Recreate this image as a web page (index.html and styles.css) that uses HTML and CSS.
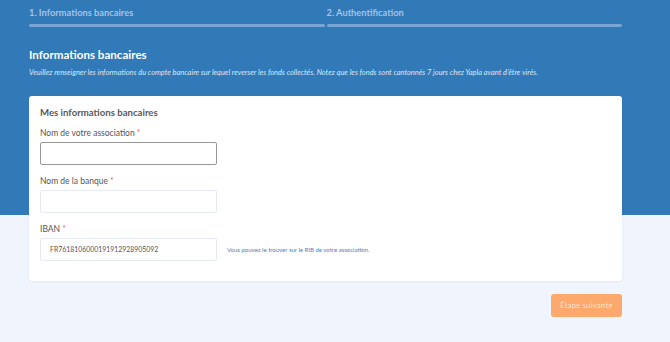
FILE: index.html
```html
<!DOCTYPE html>
<html lang="fr">
<head>
<meta charset="utf-8">
<link rel="stylesheet" href="styles.css">
</head>
<body>
<div class="hero"></div>
<div class="page">
  <div class="steps">
    <div class="step">
      <div class="step-label">1. Informations bancaires</div>
      <div class="step-bar"></div>
    </div>
    <div class="step">
      <div class="step-label">2. Authentification</div>
      <div class="step-bar"></div>
    </div>
  </div>
  <h1 class="title">Informations bancaires</h1>
  <p class="subtitle">Veuillez renseigner les informations du compte bancaire sur lequel reverser les fonds collectés. Notez que les fonds sont cantonnés 7 jours chez Yapla avant d'être virés.</p>
  <div class="card">
    <h2 class="card-title">Mes informations bancaires</h2>
    <div class="field">
      <label class="label">Nom de votre association <span class="req">*</span></label>
      <div class="input input-focus"></div>
    </div>
    <div class="field">
      <label class="label">Nom de la banque <span class="req">*</span></label>
      <div class="input"></div>
    </div>
    <div class="field">
      <label class="label">IBAN <span class="req">*</span></label>
      <div class="row">
        <div class="input">FR7618106000191912928905092</div>
        <span class="help">Vous pouvez le trouver sur le RIB de votre association.</span>
      </div>
    </div>
  </div>
  <div class="actions">
    <button class="btn">Étape suivante</button>
  </div>
</div>
</body>
</html>
```
FILE: styles.css
```css
* { box-sizing: border-box; }
html, body { margin: 0; padding: 0; }
body {
  background: #eff4fd;
  font-family: Lato, "Open Sans", sans-serif;
  width: 670px;
  height: 342px;
  overflow: hidden;
  position: relative;
}
.hero {
  position: absolute;
  left: 0; top: 0;
  width: 670px;
  height: 215px;
  background: #3279b8;
}
.page {
  position: relative;
  width: 593px;
  margin-left: 29px;
  padding-top: 7px;
}
.steps { display: flex; gap: 2px; }
.step { flex: 1; }
.step-label {
  font-size: 9.3px;
  font-weight: 700;
  color: #a3c4e5;
  height: 12px;
  line-height: 12px;
}
.step-bar {
  margin-top: 5px;
  height: 3px;
  border-radius: 2px;
  background: #79a5d3;
}
.title {
  margin: 20px 0 0;
  font-size: 11.6px;
  font-weight: 700;
  color: #fff;
  line-height: 16px;
}
.subtitle {
  margin: 4px 0 0;
  font-size: 7.45px;
  font-style: italic;
  color: #d9e7f5;
  line-height: 12px;
}
.card {
  margin-top: 17px;
  background: #fff;
  border-radius: 3px;
  padding: 10px 11px 20px;
  box-shadow: 0 1px 2px rgba(60,90,140,0.08);
}
.card-title {
  margin: 0;
  font-size: 9.6px;
  font-weight: 700;
  color: #5a5a5a;
  line-height: 13px;
}
.field { margin-top: 9px; }
.field + .field { margin-top: 11px; }
.label {
  display: block;
  font-size: 8.5px;
  color: #555;
  line-height: 11px;
}
.req { color: #e0685e; }
.input {
  margin-top: 3px;
  width: 177px;
  height: 23px;
  border: 1px solid #e5eaf5;
  border-radius: 2px;
  font-size: 6.9px;
  color: #555;
  padding-left: 9px;
  line-height: 21px;
}
.input-focus { border-color: #999; }
.row { display: flex; align-items: center; gap: 10px; }
.help {
  font-size: 6px;
  color: #4a7fc0;
  margin-top: 3px;
}
.actions {
  display: flex;
  justify-content: flex-end;
  margin-top: 13px;
}
.btn {
  width: 71px;
  height: 23px;
  border: none;
  border-radius: 3px;
  background: #fda86d;
  color: #fde3d0;
  font-family: Lato, "Open Sans", sans-serif;
  font-size: 7.5px;
  letter-spacing: 0.3px;
  padding: 0;
}
```
